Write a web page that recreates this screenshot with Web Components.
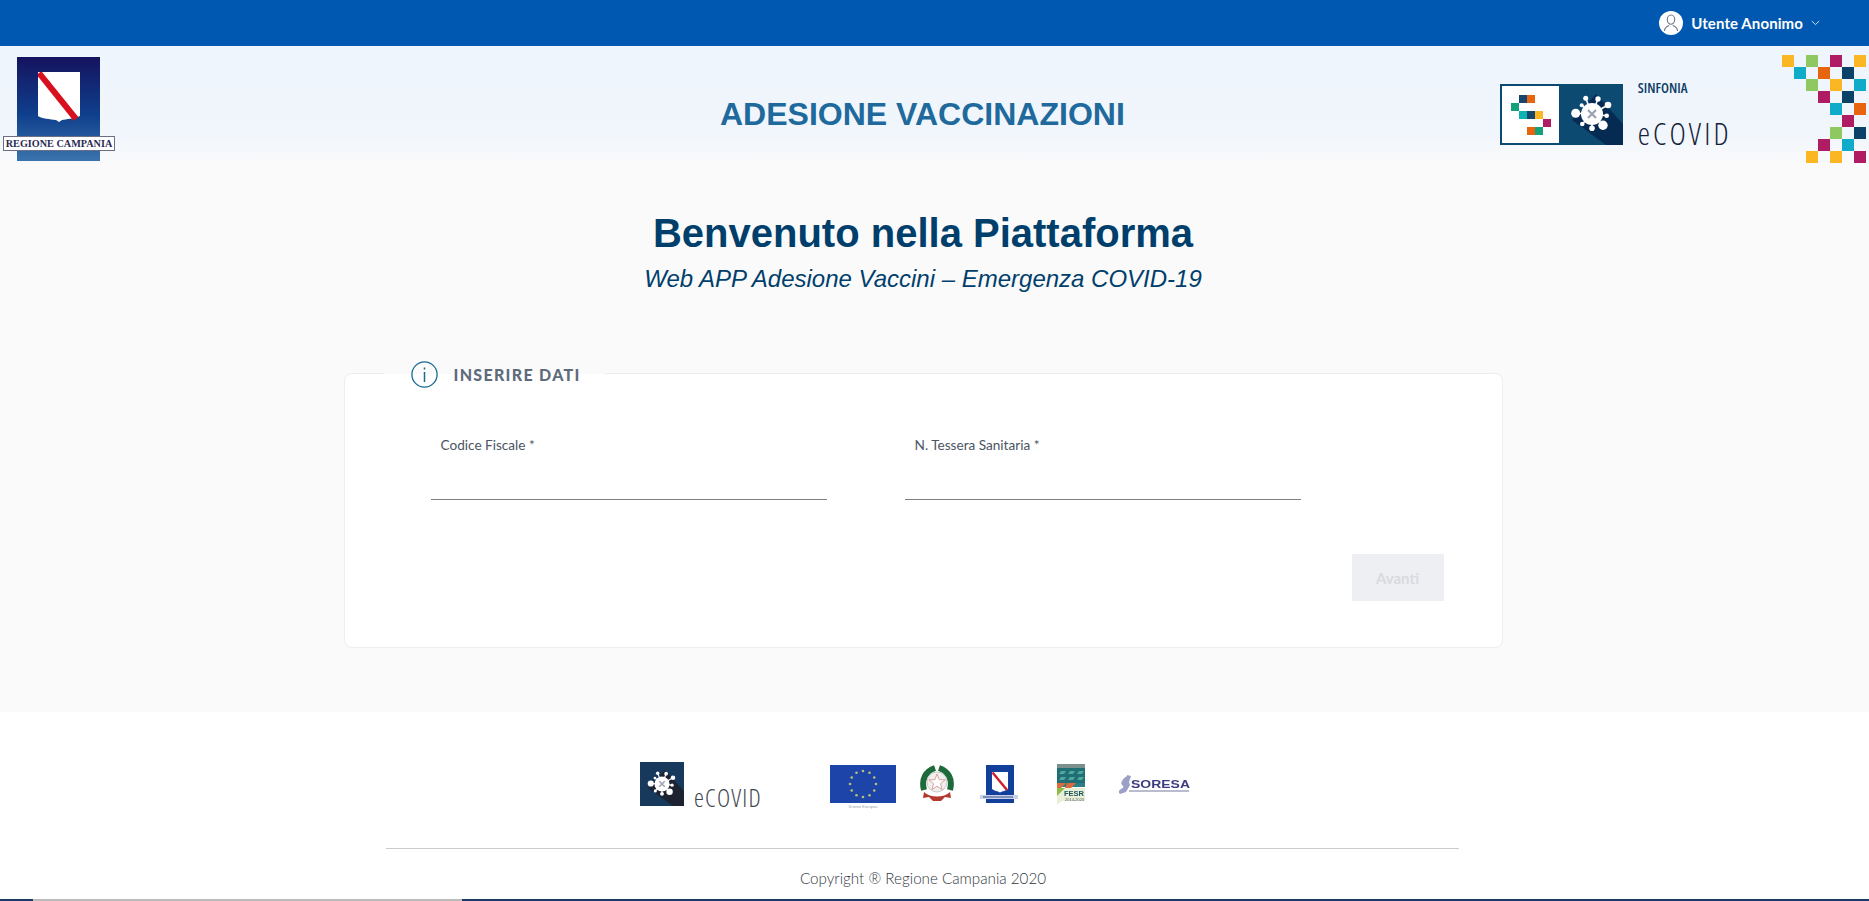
<!DOCTYPE html>
<html lang="it">
<head>
<meta charset="utf-8">
<title>Adesione Vaccinazioni</title>
<style>
  html, body { margin: 0; height: 100%; overflow: hidden; background: #fff; }
  body { font-family: Lato, "Liberation Sans", sans-serif; }
</style>
</head>
<body>
<ecovid-app></ecovid-app>

<script>
'use strict';

const define = (name, html) => {
  customElements.define(name, class extends HTMLElement {
    constructor() {
      super();
      const template = document.createElement('template');
      template.innerHTML = html;
      this.attachShadow({ mode: 'open' }).appendChild(template.content.cloneNode(true));
    }
  });
};

const VIRUS_BALLS = [
  [75.7, 29.3, 4.5], [85.7, 14.3, 2.5], [98, 15, 2.7], [108, 21, 3.3], [106.7, 31.7, 2.3],
  [103, 41.3, 4.7], [92, 44.3, 2.8], [82.3, 40, 2.3], [81.7, 21.3, 2],
];

const virusShape = VIRUS_BALLS.map(([x, y, r]) =>
  `<line x1="92" y1="30" x2="${x}" y2="${y}" stroke="#fff" stroke-width="1.6"/><circle cx="${x}" cy="${y}" r="${r}" fill="#fff"/>`
).join('');

const virusCore = `
  <circle cx="92" cy="30" r="11" fill="#fff"/>
  <path d="M88 26l8 8M96 26l-8 8" stroke="#9aa3b2" stroke-width="2.2"/>`;

define('top-bar', `
  <style>
    :host { display: flex; justify-content: flex-end; align-items: center; height: 46px; background: #0058b0; padding-right: 49px; color: #fff; }
    .avatar { width: 24px; height: 24px; border-radius: 50%; background: #fff; margin-right: 8px; }
    .name { font: 700 15px Lato, sans-serif; letter-spacing: .1px; }
    .chev { margin-left: 8px; }
  </style>
  <svg class="avatar" viewBox="0 0 24 24" fill="none" stroke="#6d7a8c" stroke-width="1.1">
    <ellipse cx="12" cy="8.6" rx="3.7" ry="4.6"/>
    <path d="M5.500 20c0-3.600 3-5 4.700-5.600M18.500 20c0-3.600-3-5-4.700-5.600"/>
  </svg>
  <span class="name"><slot></slot></span>
  <svg class="chev" width="9" height="6" viewBox="0 0 9 6" fill="none" stroke="#cfe0f3" stroke-width="1"><path d="M.8 1l3.700 3.600L8.200 1"/></svg>
`);

define('campania-logo', `
  <style>
    :host { display: block; position: relative; width: 112px; height: 104px; margin: 11px 0 0 3px; }
    .blue { display: flex; justify-content: center; width: 83px; height: 104px; margin-left: 14px; padding-top: 15px; box-sizing: border-box; background: linear-gradient(#15135f, #0f3f8c 55%, #3a73ad); }
    .label { position: absolute; left: 0; top: 79px; width: 110px; height: 13px; border: 1px solid #6b6f85; background: #fff; font: 700 10.2px/13px "Liberation Serif", serif; color: #2a2a52; text-align: center; white-space: nowrap; }
  </style>
  <div class="blue">
    <svg width="42" height="52" viewBox="0 0 42 52">
      <path d="M0 0h42v44c-6 3-14 3-18 4l-3 2-3-2c-6-1-14-1-18-4z" fill="#fff"/>
      <path d="M1 1L38 47" stroke="#d80f1f" stroke-width="6"/>
    </svg>
  </div>
  <div class="label">REGIONE CAMPANIA</div>
`);

define('sinfonia-logo', `
  <style>
    :host { display: flex; align-items: flex-start; }
    svg { display: block; width: 123px; height: 61px; margin-top: 38px; }
    .words { margin: 27px 0 0 15px; }
    .sinfonia { font: 600 14px/30px "Open Sans", sans-serif; font-stretch: 75%; color: #0e3f66; }
    .ecovid { font: 300 31px/34px "Open Sans", sans-serif; font-stretch: 75%; color: #14233a; letter-spacing: 3.1px; margin-top: 13px; }
  </style>
  <svg viewBox="0 0 123 61">
    <rect width="123" height="61" fill="#0c4a72"/>
    <rect x="2" y="2" width="57" height="57" fill="#fff"/>
    <path d="M96 10L123 40V61H106L72 36z" fill="#062b52"/>
    <g>
      <rect x="19" y="11" width="8" height="8" fill="#17456b"/><rect x="27" y="11" width="8" height="8" fill="#e8650f"/>
      <rect x="11" y="19" width="8" height="8" fill="#14a078"/>
      <rect x="19" y="27" width="8" height="8" fill="#0cb3b0"/><rect x="27" y="27" width="8" height="8" fill="#17456b"/><rect x="35" y="27" width="8" height="8" fill="#fbb723"/>
      <rect x="43" y="35" width="8" height="8" fill="#b01c63"/>
      <rect x="27" y="43" width="8" height="8" fill="#e8650f"/><rect x="35" y="43" width="8" height="8" fill="#14a078"/>
    </g>
    ${virusShape}${virusCore}
  </svg>
  <div class="words">
    <div class="sinfonia">SINFONIA</div>
    <div class="ecovid">eCOVID</div>
  </div>
`);

const Y = '#fbb723', G = '#8fc860', M = '#b01c63', C = '#0fabc9', O = '#e8650f', N = '#0c4168', _ = 'transparent';
const MOSAIC = [
  Y,_,G,_,M,_,Y,
  _,C,_,O,_,N,_,
  _,_,G,_,Y,_,C,
  _,_,_,M,_,N,_,
  _,_,_,_,C,_,O,
  _,_,_,_,_,M,_,
  _,_,_,_,G,_,N,
  _,_,_,M,_,C,_,
  _,_,Y,_,Y,_,M,
];

define('pixel-mosaic', `
  <style>
    :host { display: grid; grid-template-columns: repeat(7, 12px); grid-auto-rows: 12px; margin-top: 9px; }
  </style>
  ${MOSAIC.map(c => `<i style="background:${c}"></i>`).join('')}
`);

define('site-header', `
  <style>
    :host { display: grid; grid-template-columns: 720px auto 1fr; height: 119px; background: linear-gradient(#eff5fd, #f1f6fc 75%, #fafafb); }
    h1 { margin: 53px 0 0; font: 700 32px/30px "Liberation Sans", Arial, sans-serif; color: #20699c; white-space: nowrap; }
    .right { display: flex; justify-content: space-between; padding-left: 375px; margin-right: 3px; }
  </style>
  <div><campania-logo></campania-logo></div>
  <h1><slot></slot></h1>
  <div class="right">
    <sinfonia-logo></sinfonia-logo>
    <pixel-mosaic></pixel-mosaic>
  </div>
`);

define('welcome-banner', `
  <style>
    :host { display: block; text-align: center; color: #003f6b; padding-top: 46px; font-family: "Liberation Sans", Arial, sans-serif; }
    h2 { margin: 0; font: 700 40px/44px "Liberation Sans", Arial, sans-serif; }
    p { margin: 10px 0 0; font: italic 400 24px/28px "Liberation Sans", Arial, sans-serif; }
  </style>
  <h2><slot name="title"></slot></h2>
  <p><slot name="subtitle"></slot></p>
`);

define('form-field', `
  <style>
    :host { display: block; width: 396px; }
    label { display: block; padding-left: 10px; font: 400 13.6px/16px Lato, sans-serif; color: #4a5563; }
    .line { height: 46px; border-bottom: 1px solid #7d7f84; }
  </style>
  <label><slot></slot></label>
  <div class="line"></div>
`);

define('form-card', `
  <style>
    :host { display: block; position: relative; width: 1159px; height: 275px; margin: 0 auto; box-sizing: border-box; background: #fff; border: 1px solid #eceef0; border-radius: 8px; padding: 63px 58px 0 86px; }
    .legend { position: absolute; left: 40px; top: -16px; display: flex; align-items: center; height: 32px; padding: 0 24px 0 26px; background: linear-gradient(#fafafb 50%, #fff 50%); font: 900 16px Lato, sans-serif; letter-spacing: 1.3px; color: #5f6b7a; }
    .legend svg { margin-right: 16px; }
    .fields { display: flex; gap: 78px; }
    .actions { display: flex; justify-content: flex-end; margin-top: 54px; }
    button { width: 92px; height: 47px; border: 0; border-radius: 1px; background: #eeeff3; color: #d9dade; font: 700 15px Lato, sans-serif; padding: 0; }
  </style>
  <div class="legend">
    <svg width="27" height="27" viewBox="0 0 27 27" fill="none" stroke="#1b6a94" stroke-width="1.3">
      <circle cx="13.5" cy="13.5" r="12.6"/>
      <path d="M13.500 11v10M13.500 6.500v2" stroke-width="1.5"/>
    </svg>
    <slot name="legend"></slot>
  </div>
  <div class="fields"><slot></slot></div>
  <div class="actions"><button disabled>Avanti</button></div>
`);

define('main-panel', `
  <style>
    :host { display: block; height: 547px; padding-right: 23px; background: #fafafb; }
  </style>
  <slot></slot>
`);

define('footer-logos', `
  <style>
    :host { display: flex; align-items: flex-start; height: 86px; padding: 50px 0 0 640px; }
    svg { display: block; flex: none; filter: blur(.35px); }
    .brand { display: flex; align-items: flex-end; width: 190px; }
    .brand span { font: 300 25px/24px "Open Sans", sans-serif; font-stretch: 75%; color: #3f4651; letter-spacing: 1.2px; margin: 0 0 -3px 10px; }
  </style>
  <div class="brand">
    <svg width="44" height="44" viewBox="60 -2 64 64">
      <rect x="60" y="-2" width="64" height="64" fill="#173a5c"/>
      <path d="M96 10L124 40V62H108L72 36z" fill="#1d2230"/>
      ${virusShape}${virusCore}
    </svg>
    <span>eCOVID</span>
  </div>
  <svg width="66" height="44" viewBox="0 0 66 44" style="margin-right:24px;margin-top:3px">
    <rect width="66" height="38" fill="#1d44a8"/>
    ${Array.from({ length: 12 }, (_, i) => {
      const a = i * Math.PI / 6;
      return `<circle cx="${33 + 13 * Math.sin(a)}" cy="${19 - 13 * Math.cos(a)}" r="1.3" fill="#b9c070"/>`;
    }).join('')}
    <text x="33" y="43" font-size="4" font-family="Liberation Sans" fill="#9a9ea6" text-anchor="middle">Unione Europea</text>
  </svg>
  <svg width="34" height="38" viewBox="0 0 34 38" style="margin-right:26px;margin-top:3px">
    <path d="M15 3C6 6 1 14 4 25" stroke="#1e6a3a" stroke-width="6" fill="none"/>
    <path d="M19 3C28 6 33 14 30 25" stroke="#1e6a3a" stroke-width="6" fill="none"/>
    <circle cx="17" cy="17" r="10" fill="#efefee" stroke="#c9c9c6"/>
    <path d="M17 9l2.200 5.600 6 .3-4.700 3.800 1.600 5.800-5.100-3.300-5 3.300 1.600-5.800-4.700-3.800 6-.3z" fill="#fff" stroke="#d98a8a" stroke-width=".8"/>
    <path d="M4 27c6 6 20 6 26 0l1 6-6-1-4 4h-8l-4-4-6 1z" fill="#b5382f"/>
  </svg>
  <svg width="38" height="38" viewBox="0 0 38 38" style="margin-right:38px;margin-top:3px">
    <rect x="6" y="0" width="28" height="38" fill="#123f9c"/>
    <path d="M12 7h16v17c-3 2-5 2-8 3.500-3-1.500-5-1.500-8-3.500z" fill="#fff"/>
    <path d="M12.500 7.500L27 25" stroke="#cf2030" stroke-width="2.500"/>
    <rect x="0" y="30" width="38" height="4" fill="#c7d2ea"/>
    <rect x="3" y="31" width="30" height="2" fill="#7f8fb8"/>
  </svg>
  <svg width="30" height="41" viewBox="0 0 30 41" style="margin-right:32px;margin-top:2px">
    <rect x="1" y="0" width="28" height="4" fill="#7b8f8c"/>
    <path d="M1 4h28v15H1z" fill="#1f6f74"/>
    <path d="M5 7h5l-2 3H3zM14 7h5l-2 3h-5zM23 7h5l-2 3h-5zM5 13h5l-2 3H3zM14 13h5l-2 3h-5zM23 13h5l-2 3h-5z" fill="#4fa79e"/>
    <path d="M1 19h28v4H1z" fill="#2b8087"/>
    <path d="M1 19h9l-5 5H1zM11 19h9l-5 5h-6z" fill="#db6b3a"/>
    <path d="M1 24h28v13H6l-5 4z" fill="#e9efd6"/>
    <path d="M1 24h8L1 32z" fill="#8cbb48"/>
    <text x="8" y="32" font-size="7.500" font-weight="700" font-family="Liberation Sans" fill="#1b5560">FESR</text>
    <text x="9" y="37" font-size="4" font-family="Liberation Sans" fill="#4b5f66">2014-2020</text>
  </svg>
  <svg width="74" height="20" viewBox="0 0 74 20" style="margin-top:13px">
    <path d="M9 0l4 1-2 6 1 3-4 7-6 2c-2-2-1-4 1-5 3-1 3-3 1-4-2-2 1-7 5-9z" fill="#9aa0c6"/>
    <text x="13" y="13" font-size="10" font-weight="700" font-family="Liberation Sans" fill="#3c3c82" textLength="59" lengthAdjust="spacingAndGlyphs">SORESA</text>
    <rect x="11" y="15" width="60" height="2" fill="#b9bcce"/>
  </svg>
`);

define('site-footer', `
  <style>
    :host { display: block; height: 187px; background: #fff; overflow: hidden; }
    hr { width: 1073px; margin: 0 0 0 386px; border: 0; border-top: 1px solid #cbcbcb; }
    .copy { padding-right: 23px; text-align: center; font: 300 15.2px/20px Lato, sans-serif; color: #2f3640; margin-top: 19px; }
  </style>
  <footer-logos></footer-logos>
  <hr>
  <div class="copy"><slot></slot></div>
`);

define('page-scrollbar', `
  <style>
    :host { display: block; height: 2px; background: #1c3c68; }
    div { height: 2px; width: 429px; margin-left: 33px; background: #bcbcbc; }
  </style>
  <div></div>
`);

define('ecovid-app', `
  <style>
    :host { display: block; height: 901px; overflow: hidden; }
    form-card { margin-top: 80px; }
  </style>
  <top-bar>Utente Anonimo</top-bar>
  <site-header>ADESIONE VACCINAZIONI</site-header>
  <main-panel>
    <welcome-banner>
      <span slot="title">Benvenuto nella Piattaforma</span>
      <span slot="subtitle">Web APP Adesione Vaccini – Emergenza COVID-19</span>
    </welcome-banner>
    <form-card>
      <span slot="legend">INSERIRE DATI</span>
      <form-field>Codice Fiscale *</form-field>
      <form-field>N. Tessera Sanitaria *</form-field>
    </form-card>
  </main-panel>
  <site-footer>Copyright ® Regione Campania 2020</site-footer>
  <page-scrollbar></page-scrollbar>
`);
</script>
</body>
</html>
